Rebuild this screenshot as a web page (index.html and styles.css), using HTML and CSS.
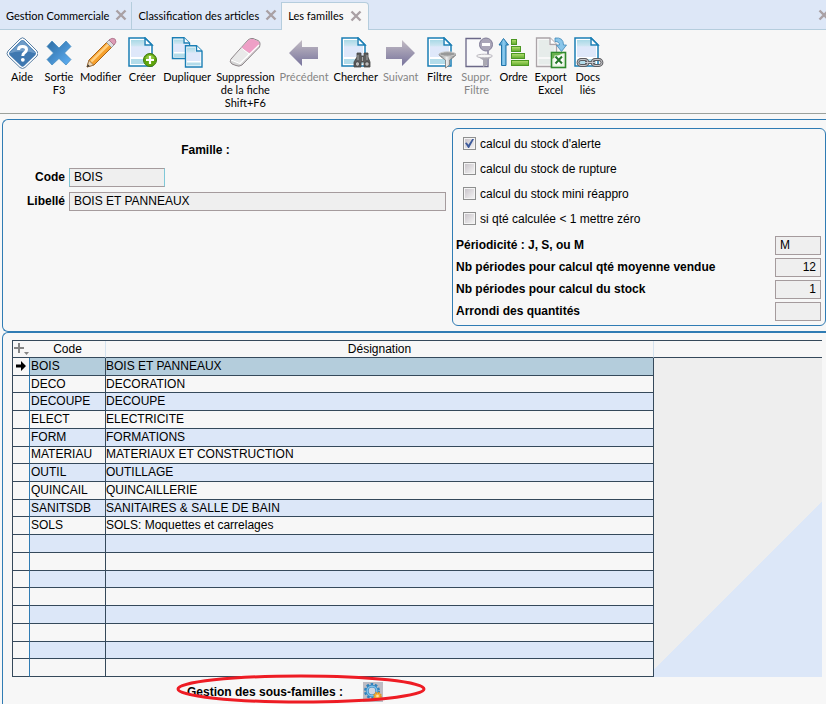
FILE: index.html
```html
<!DOCTYPE html>
<html lang="fr">
<head>
    <meta charset="UTF-8">
    <meta name="viewport" content="width=device-width, initial-scale=1.0">
    <title>Les familles</title>
    <link rel="stylesheet" href="styles.css">
</head>
<body>

    <!-- Shared gradients and shapes -->
    <svg class="defs" width="0" height="0" aria-hidden="true">
        <defs>
            <linearGradient id="blue" x1="0" y1="0" x2="1" y2="1">
                <stop offset="0" stop-color="#2d6ca3"/>
                <stop offset="1" stop-color="#5fb0f5"/>
            </linearGradient>
            <linearGradient id="paper" x1="0" y1="0" x2="0" y2="1">
                <stop offset="0" stop-color="#a9d9e6"/>
                <stop offset="0.35" stop-color="#cfe6f2"/>
                <stop offset="0.4" stop-color="#dfe8fa"/>
                <stop offset="1" stop-color="#dfe8fa"/>
            </linearGradient>
            <linearGradient id="arrow" x1="0" y1="0" x2="0" y2="1">
                <stop offset="0" stop-color="#c3bcc4"/>
                <stop offset="1" stop-color="#77739c"/>
            </linearGradient>
            <linearGradient id="metal" x1="0" y1="0" x2="1" y2="0">
                <stop offset="0" stop-color="#777"/>
                <stop offset="0.45" stop-color="#eee"/>
                <stop offset="1" stop-color="#777"/>
            </linearGradient>
            <linearGradient id="green" x1="0" y1="0" x2="0" y2="1">
                <stop offset="0" stop-color="#b4e070"/>
                <stop offset="1" stop-color="#5fa92c"/>
            </linearGradient>
            <linearGradient id="up" x1="0" y1="0" x2="1" y2="0">
                <stop offset="0" stop-color="#2f86bd"/>
                <stop offset="0.5" stop-color="#8fcdf0"/>
                <stop offset="1" stop-color="#2f86bd"/>
            </linearGradient>
            <symbol id="page" viewBox="0 0 26 31">
                <path d="M1 1H17L24 8V29H1Z" fill="#fff" stroke="#1b7fb5" stroke-width="1.5"/>
                <path d="M3 3H16V9H22V20H3Z" fill="url(#paper)"/>
                <path d="M3 22H22V27H3Z" fill="#b3dcea"/>
                <path d="M17 1V8H24Z" fill="#fff" stroke="#1b7fb5" stroke-width="1.5"/>
            </symbol>
            <symbol id="close" viewBox="0 0 12 12">
                <path d="M1.5 1.5L10.5 10.5M10.5 1.5L1.5 10.5" stroke="#a9a0a4" stroke-width="2.4"/>
            </symbol>
        </defs>
    </svg>

    <nav class="tabs">
        <div class="tab">
            <a href="#">Gestion Commerciale</a>
            <button type="button" aria-label="Fermer"><svg width="12" height="12"><use href="#close"/></svg></button>
        </div>
        <div class="tab">
            <a href="#">Classification des articles</a>
            <button type="button" aria-label="Fermer"><svg width="12" height="12"><use href="#close"/></svg></button>
        </div>
        <div class="tab active">
            <a href="#">Les familles</a>
            <button type="button" aria-label="Fermer"><svg width="12" height="12"><use href="#close"/></svg></button>
        </div>
        <button type="button" class="close-all" aria-label="Tout fermer"><svg width="12" height="12"><use href="#close"/></svg></button>
    </nav>

    <div class="toolbar">
        <button type="button" class="tool">
            <svg width="32" height="32" viewBox="0 0 32 32">
                <path d="M14 2Q16.500 -0.500 19 2L31 14Q33 16.500 31 19L19 30.500Q16.500 32.500 14 30.500L2 19Q0 16.500 2 14Z" fill="#fff" stroke="#5a7fa3"/>
                <path d="M15 3.500Q16.500 2.500 18 3.500L29.500 15Q30.500 16.500 29.500 18L18 29Q16.500 30.500 15 29L3.500 18Q2.500 16.500 3.500 15Z" fill="#3f78b0"/>
                <path d="M3 16.500L16.500 3L30 16.500Q16 12 3 16.500Z" fill="#6f9cc8"/>
                <path d="M12.500 13Q12.500 9.500 16.500 9.500Q20.500 9.500 20.500 12.500Q20.500 14.500 18.500 15.700Q16.800 16.700 16.800 19" fill="none" stroke="#fff" stroke-width="3"/>
                <circle cx="16.800" cy="22.800" r="1.900" fill="#fff"/>
            </svg>
            <span>Aide</span>
        </button>
        <button type="button" class="tool">
            <svg width="32" height="32" viewBox="0 0 32 32">
                <path d="M9 4L16 11L23 4L28 9.500L21.500 16L28 22.500L23 28L16 21.500L9 28L4 22.500L10.500 16L4 9.500Z" fill="url(#blue)" stroke="#3c86bd" stroke-width="0.700"/>
            </svg>
            <span>Sortie<br>F3</span>
        </button>
        <button type="button" class="tool">
            <svg width="32" height="32" viewBox="0 0 32 32">
                <path d="M2 30L4 23L22 5L27 10L9 28Z" fill="#f6a02c" stroke="#a9661c"/>
                <path d="M5.500 23.500L23 6L24.800 7.800L7 25.500Z" fill="#ffd083"/>
                <path d="M2 30L4 23.500L8.500 28Z" fill="#f0d9b5" stroke="#8c6a45" stroke-width="0.700"/>
                <path d="M2 30L2.800 27.200L4.800 29.200Z" fill="#333"/>
                <path d="M21.500 5.500L24.500 2.500L29.500 7.500L26.500 10.500Z" fill="#ddd" stroke="#888" stroke-width="0.800"/>
                <path d="M24 3Q27 0 30 2Q32.500 5 29 8Z" fill="#dd9bb5" stroke="#a86f86" stroke-width="0.800"/>
            </svg>
            <span>Modifier</span>
        </button>
        <button type="button" class="tool">
            <svg width="32" height="32" viewBox="0 0 32 32">
                <use href="#page" x="2" y="0" width="26" height="31"/>
                <circle cx="24" cy="23" r="6.500" fill="#5fa50c" stroke="#3f7a10"/>
                <path d="M19 21Q24 14 29 21Q24 24 19 21Z" fill="#8cc63c"/>
                <path d="M24 19V27M20 23H28" stroke="#fff" stroke-width="2.200"/>
            </svg>
            <span>Créer</span>
        </button>
        <button type="button" class="tool">
            <svg width="32" height="32" viewBox="0 0 32 32">
                <path d="M1.500 0.700H13L18.500 6V21.500H1.500Z" fill="#fff" stroke="#1b7fb5" stroke-width="1.400"/>
                <path d="M3 2.500H12V7H17V15H3Z" fill="url(#paper)"/>
                <path d="M3 16.500H17V20H3Z" fill="#b3dcea"/>
                <path d="M13 0.700V6H18.500" fill="#fff" stroke="#1b7fb5" stroke-width="1.400"/>
                <path d="M14.500 8.700H25.500L31 14V30H14.500Z" fill="#fff" stroke="#1b7fb5" stroke-width="1.400"/>
                <path d="M16 10.500H24V15H29.500V24H16Z" fill="url(#paper)"/>
                <path d="M16 25.500H29.500V28.500H16Z" fill="#b3dcea"/>
                <path d="M25.500 8.700V14H31" fill="#fff" stroke="#1b7fb5" stroke-width="1.400"/>
            </svg>
            <span>Dupliquer</span>
        </button>
        <button type="button" class="tool">
            <svg width="32" height="32" viewBox="0 0 32 32">
                <path d="M2 22L19 3Q21 1 24 1.500L29 3.500Q32 5 30.500 10L13 28Q10 30 7 28.500L3 27Q0 25 2 22Z" fill="#d5d5d5" stroke="#8d8589"/>
                <path d="M12.500 11L19 3.500Q21 1.500 24 2L28.500 4Q31.500 5.500 29.500 9L22 17Z" fill="#ee9fc6"/>
                <path d="M2.500 22.500L12 11.500L21.500 17L11.500 26Z" fill="#e9e9e9"/>
                <path d="M2 23L11 26.500L30 8" fill="none" stroke="#fff" stroke-width="1.200"/>
                <path d="M12.500 11L20 17L17.500 21" fill="none" stroke="#fff"/>
            </svg>
            <span>Suppression<br>de la fiche<br>Shift+F6</span>
        </button>
        <button type="button" class="tool" disabled>
            <svg width="32" height="32" viewBox="0 0 32 32">
                <path d="M1 16L14 3V10H30V22H14V29Z" fill="url(#arrow)"/>
            </svg>
            <span>Précédent</span>
        </button>
        <button type="button" class="tool">
            <svg width="32" height="32" viewBox="0 0 32 32">
                <use href="#page" x="1" y="0" width="26" height="31"/>
                <path d="M17 16H21V19H24V16H28V20L30 25V30H24V25H21V30H14V25L17 20Z" fill="#5d5d5d" stroke="#444" stroke-width="0.800"/>
                <circle cx="17.500" cy="27" r="2.300" fill="#bbb" stroke="#444"/>
                <circle cx="27" cy="27" r="2.300" fill="#bbb" stroke="#444"/>
                <path d="M18 18V23M27 18V23M22.500 20V24" stroke="#aaa"/>
            </svg>
            <span>Chercher</span>
        </button>
        <button type="button" class="tool" disabled>
            <svg width="32" height="32" viewBox="0 0 32 32">
                <path d="M30 16L17 3V10H1V22H17V29Z" fill="url(#arrow)"/>
            </svg>
            <span>Suivant</span>
        </button>
        <button type="button" class="tool">
            <svg width="32" height="32" viewBox="0 0 32 32">
                <use href="#page" x="3" y="0" width="26" height="31"/>
                <path d="M15 17Q15 19 21.500 23V31L25.500 28V23Q32 19 32 17Z" fill="url(#metal)" stroke="#777" stroke-width="0.800"/>
                <ellipse cx="23.500" cy="17" rx="8" ry="2.200" fill="#999" stroke="#ccc"/>
            </svg>
            <span>Filtre</span>
        </button>
        <button type="button" class="tool" disabled>
            <svg width="32" height="32" viewBox="0 0 32 32">
                <path d="M20 1.500H5V29.500H27V14" fill="#f9f9fb" stroke="#6b6888" stroke-width="1.300"/>
                <path d="M16 19Q17 20 22 23V30L26 28V23Q31 20 31 19Z" fill="#aaa8b2"/>
                <ellipse cx="23.500" cy="19" rx="8" ry="1.800" fill="#f7f7f7" stroke="#bbb8c0"/>
                <circle cx="25" cy="7.500" r="6.500" fill="#aaa6b8" stroke="#817d98"/>
                <rect x="21" y="6" width="8" height="3" fill="#fff"/>
            </svg>
            <span>Suppr.<br>Filtre</span>
        </button>
        <button type="button" class="tool">
            <svg width="32" height="32" viewBox="0 0 32 32">
                <path d="M5.500 1.500L10.500 8H8V28.500H3.500V8H1Z" fill="url(#up)" stroke="#1f73a8"/>
                <g fill="url(#green)" stroke="#4c9722">
                    <rect x="13.500" y="2.500" width="5" height="5"/>
                    <rect x="13.500" y="9.500" width="9" height="5"/>
                    <rect x="13.500" y="16.500" width="13" height="5"/>
                    <rect x="13.500" y="23.500" width="17" height="5"/>
                </g>
            </svg>
            <span>Ordre</span>
        </button>
        <button type="button" class="tool">
            <svg width="32" height="32" viewBox="0 0 32 32">
                <path d="M1.500 1H15L21.500 7.500V29.500H1.500Z" fill="#f8f8f8" stroke="#aba4a8" stroke-width="1.300"/>
                <path d="M3.500 3H14V9H19.500V20H3.500ZM3.500 22H19.500V27.500H3.500Z" fill="#e6ecea"/>
                <path d="M15 1V7.500H21.500" fill="#fff" stroke="#aba4a8" stroke-width="1.300"/>
                <path d="M20 1Q28.500 0 28.500 8H31.500L26.500 14.500L21.500 8H24.500Q24.500 4.500 20 4.500Z" fill="#8ac6ea" stroke="#3f88b8" stroke-width="0.800"/>
                <rect x="16.500" y="15.500" width="14" height="15" fill="#e9f3e4" stroke="#2f8a2c" stroke-width="1.600"/>
                <path d="M17 16H28L17 22Z" fill="#69b14e"/>
                <rect x="19.500" y="18.500" width="8.500" height="9" fill="#fff"/>
                <path d="M20.500 19.500L27 26.500M27 19.500L20.500 26.500" stroke="#26782a" stroke-width="2"/>
            </svg>
            <span>Export<br>Excel</span>
        </button>
        <button type="button" class="tool">
            <svg width="32" height="32" viewBox="0 0 32 32">
                <use href="#page" x="2" y="0" width="26" height="31"/>
                <g fill="none" stroke="#5c5c60" stroke-width="2.800">
                    <rect x="6" y="22.500" width="10" height="6" rx="3"/>
                    <rect x="20" y="22.500" width="10" height="6" rx="3"/>
                    <path d="M13 25.500H23"/>
                </g>
                <g fill="none" stroke="#d5d5d8" stroke-width="0.900">
                    <rect x="6" y="22.500" width="10" height="6" rx="3"/>
                    <rect x="20" y="22.500" width="10" height="6" rx="3"/>
                    <path d="M13 25.500H23"/>
                </g>
            </svg>
            <span>Docs<br>liés</span>
        </button>
    </div>

    <main>
        <form class="panel family">
            <div class="identity">
                <h1>Famille :</h1>
                <div class="fields">
                    <label for="code">Code</label>
                    <input type="text" id="code" class="code" value="BOIS" readonly>
                    <label for="libelle">Libellé</label>
                    <input type="text" id="libelle" value="BOIS ET PANNEAUX" readonly>
                </div>
            </div>

            <div class="stock">
                <div class="checks">
                    <label><input type="checkbox" checked>calcul du stock d'alerte</label>
                    <label><input type="checkbox">calcul du stock de rupture</label>
                    <label><input type="checkbox">calcul du stock mini réappro</label>
                    <label><input type="checkbox">si qté calculée &lt; 1 mettre zéro</label>
                </div>
                <div class="params">
                    <label for="periodicite">Périodicité : J, S, ou M</label>
                    <input type="text" id="periodicite" value="M" readonly>
                    <label for="nb-vendue">Nb périodes pour calcul qté moyenne vendue</label>
                    <input type="text" id="nb-vendue" class="number" value="12" readonly>
                    <label for="nb-stock">Nb périodes pour calcul du stock</label>
                    <input type="text" id="nb-stock" class="number" value="1" readonly>
                    <label for="arrondi">Arrondi des quantités</label>
                    <input type="text" id="arrondi" class="number" value="" readonly>
                </div>
            </div>
        </form>

        <section class="panel list">
            <div class="grid">
                <table>
                    <thead>
                        <tr>
                            <th class="mark">
                                <svg width="16" height="14" viewBox="0 0 16 14" aria-hidden="true">
                                    <path d="M1 6H11M6 1V11" stroke="#858585" stroke-width="2"/>
                                    <path d="M11 10H16L13.500 13Z" fill="#858585"/>
                                </svg>
                            </th>
                            <th class="col-code">Code</th>
                            <th>Désignation</th>
                        </tr>
                    </thead>
                    <tbody>
                        <tr class="selected">
                            <td class="mark">
                                <svg width="10" height="10" viewBox="0 0 10 10" aria-hidden="true"><path d="M0 3.500H5V0L10 5L5 10V6.500H0Z"/></svg>
                            </td>
                            <td>BOIS</td><td>BOIS ET PANNEAUX</td>
                        </tr>
                        <tr><td></td><td>DECO</td><td>DECORATION</td></tr>
                        <tr><td></td><td>DECOUPE</td><td>DECOUPE</td></tr>
                        <tr><td></td><td>ELECT</td><td>ELECTRICITE</td></tr>
                        <tr><td></td><td>FORM</td><td>FORMATIONS</td></tr>
                        <tr><td></td><td>MATERIAU</td><td>MATERIAUX ET CONSTRUCTION</td></tr>
                        <tr><td></td><td>OUTIL</td><td>OUTILLAGE</td></tr>
                        <tr><td></td><td>QUINCAIL</td><td>QUINCAILLERIE</td></tr>
                        <tr><td></td><td>SANITSDB</td><td>SANITAIRES &amp; SALLE DE BAIN</td></tr>
                        <tr><td></td><td>SOLS</td><td>SOLS: Moquettes et carrelages</td></tr>
                        <tr><td></td><td></td><td></td></tr>
                        <tr><td></td><td></td><td></td></tr>
                        <tr><td></td><td></td><td></td></tr>
                        <tr><td></td><td></td><td></td></tr>
                        <tr><td></td><td></td><td></td></tr>
                        <tr><td></td><td></td><td></td></tr>
                        <tr><td></td><td></td><td></td></tr>
                        <tr><td></td><td></td><td></td></tr>
                    </tbody>
                </table>
                <div class="filler">
                    <div class="filler-head"></div>
                    <div class="filler-body"></div>
                </div>
            </div>

            <div class="subfamilies">
                <label for="sous-familles">Gestion des sous-familles :</label>
                <button type="button" id="sous-familles">
                    <svg width="20" height="20" viewBox="0 0 20 20">
                        <circle cx="9" cy="9" r="6.500" fill="none" stroke="#3183bd" stroke-width="3" stroke-dasharray="2.400 1.680"/>
                        <circle cx="9" cy="9" r="4.800" fill="#cfd6e2" stroke="#3183bd" stroke-width="2.800"/>
                        <circle cx="9" cy="9" r="4.800" fill="none" stroke="#7fc0ea" stroke-width="1.500"/>
                        <circle cx="14.500" cy="14" r="3.300" fill="#f7b53c" stroke="#e29321" stroke-width="2" stroke-dasharray="1.500 1.100"/>
                        <circle cx="14.500" cy="14" r="1.300" fill="#fbe3ae"/>
                    </svg>
                </button>
                <svg class="highlight" width="252" height="30" viewBox="0 0 252 30" aria-hidden="true">
                    <ellipse cx="126" cy="15" rx="123" ry="13" fill="none" stroke="#ee1c24" stroke-width="3"/>
                </svg>
            </div>
        </section>
    </main>

</body>
</html>
```
FILE: styles.css
```css
* {
    box-sizing: border-box;
}

body {
    display: flex;
    flex-direction: column;
    min-height: 100vh;
    margin: 0;
    background-color: #f7f7f7;
    color: #000;
    font-family: "Liberation Sans", Arial, sans-serif;
    font-size: 12px;
    overflow-x: hidden;
}

button {
    padding: 0;
    border: none;
    background: none;
    color: inherit;
    font: inherit;
}

svg {
    display: block;
    flex: none;
}

.defs {
    position: absolute;
}

/* Tabs */
.tabs {
    display: flex;
    height: 30px;
    padding-top: 2px;
    background-color: #dde7f7;
    border-bottom: 1px solid #b5cddd;
    font-family: Lato, "Segoe UI", sans-serif;
    font-size: 11px;
}

.tab {
    display: flex;
    align-items: center;
    gap: 6px;
    height: 28px;
    padding: 0 4px 2px 6px;
    border-right: 1px solid #b5cddd;
}

.tab a {
    color: #000;
    text-decoration: none;
}

.tab.active {
    padding-right: 6px;
    background-color: #f7f7f7;
    border-top: 1px solid #b5cddd;
    border-radius: 0 4px 0 0;
}

.close-all {
    width: 8px;
    margin-left: auto;
    padding-bottom: 2px;
    overflow: hidden;
}

/* Toolbar */
.toolbar {
    display: flex;
    align-items: flex-start;
    gap: 5px;
    height: 84px;
    padding: 7px 6px 0;
    border-bottom: 1px solid #9ba09b;
    font-family: Lato, "Segoe UI", sans-serif;
    font-size: 11px;
    line-height: 13px;
}

.tool {
    display: flex;
    flex-direction: column;
    align-items: center;
    gap: 1px;
    min-width: 32px;
    text-align: center;
    white-space: nowrap;
}

.tool:disabled {
    color: #858585;
}

/* Panels */
main {
    display: flex;
    flex: 1;
    flex-direction: column;
    padding: 5px 0 0 2px;
}

.panel {
    border: 1px solid #307cb4;
    border-right: none;
    border-radius: 6px 0 0 6px;
}

.family {
    display: flex;
    gap: 6px;
    margin: 0;
    padding: 8px 0 5px;
}

input[type="text"] {
    width: 100%;
    height: 19px;
    padding: 0 4px;
    border: 1px solid #a59b9d;
    background-color: #efefef;
    color: #000;
    font: inherit;
}

.identity {
    flex: 1;
    padding-top: 14px;
}

.identity h1 {
    margin: 0 0 7px;
    padding-right: 38px;
    font-size: 12px;
    line-height: 16px;
    text-align: center;
}

.fields {
    display: grid;
    grid-template-columns: 62px 1fr;
    column-gap: 4px;
    align-items: center;
    font-weight: bold;
    line-height: 24px;
    text-align: right;
}

.fields input[type="text"],
.params input[type="text"] {
    font-weight: normal;
}

input[type="text"].code {
    width: 96px;
    border-right-color: #7fc8d8;
    border-left-color: #7fc8d8;
}

.stock {
    width: 374px;
    padding: 2px 4px 3px 3px;
    border: 1px solid #307cb4;
    border-radius: 6px;
}

.checks {
    display: grid;
    margin-bottom: 3px;
    padding-left: 7px;
}

.checks label {
    display: flex;
    align-items: center;
    gap: 4px;
    height: 25px;
}

.checks input {
    appearance: none;
    width: 13px;
    height: 13px;
    margin: 0;
    border: 1px solid #8e8f8f;
    background: linear-gradient(135deg, #c5c0c6, #f7f7f7);
    box-shadow: inset 0 0 0 1px #f4f4f4;
}

.checks input:checked::after {
    content: "";
    display: block;
    width: 9px;
    height: 9px;
    margin: 1px;
    background-color: #3d5b9b;
    clip-path: polygon(0 45%, 20% 40%, 38% 65%, 80% 0, 100% 0, 45% 100%, 35% 100%);
}

.params {
    display: grid;
    grid-template-columns: 1fr 46px;
    grid-auto-rows: 22px;
    align-items: center;
    font-weight: bold;
}

input[type="text"].number {
    text-align: right;
}

/* Families list */
.list {
    flex: 1;
    padding: 7px 4px 0 9px;
    border-bottom: none;
    border-radius: 6px 0 0 0;
    overflow: hidden;
}

.grid {
    display: flex;
}

table {
    flex: 1;
    height: 337px;
    table-layout: fixed;
    border-spacing: 0;
    border-top: 1px solid #35495b;
    border-left: 1px solid #35495b;
}

th,
td {
    height: 17px;
    padding: 0;
    border-bottom: 1px solid #35495b;
    font-weight: normal;
    line-height: 15px;
    white-space: nowrap;
}

th {
    border-right: 1px solid #d5e3ef;
}

th.mark {
    width: 17px;
    border-right: none;
}

th.col-code {
    width: 76px;
}

td {
    padding-left: 1px;
    border-right: 1px solid #35495b;
}

td:last-child {
    padding-left: 0;
}

td:first-child {
    padding-left: 3px;
    border-right-color: #307cb4;
}

tbody tr:nth-child(odd) td:not(:first-child) {
    background-color: #dce7f8;
}

tbody tr.selected td:not(:first-child) {
    background-color: #b4cddc;
}

/* Empty area right of the last column */
.filler {
    display: flex;
    flex-direction: column;
    width: 168px;
}

.filler-head {
    height: 18px;
    border-top: 1px solid #35495b;
    border-bottom: 1px solid #35495b;
}

.filler-body {
    flex: 1;
    background: linear-gradient(135deg, #eee 64%, #dce7f8 64%);
}

.subfamilies {
    display: flex;
    position: relative;
    align-items: center;
    gap: 20px;
    width: max-content;
    margin: 5px 0 0 175px;
    font-weight: bold;
}

.subfamilies button {
    background-color: #bdbcc4;
}

.highlight {
    position: absolute;
    top: -8px;
    left: -12px;
}
```
